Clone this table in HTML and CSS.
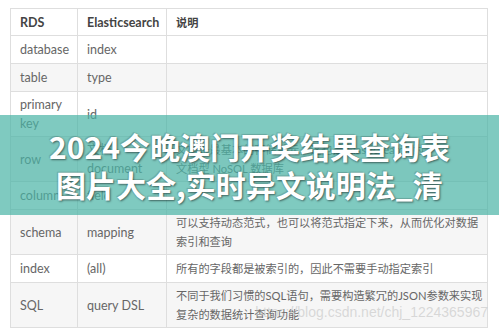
FILE: index.html
```html
<!DOCTYPE html>
<html>
<head>
  <title>RDS 与 Elasticsearch 对照</title>
  <link rel="stylesheet" href="styles.css">
</head>
<body>
  <div class="page">
    <table class="compare">
      <colgroup>
        <col class="c1">
        <col class="c2">
        <col class="c3">
      </colgroup>
      <tr class="head">
        <th>RDS</th>
        <th>Elasticsearch</th>
        <th class="desc">说明</th>
      </tr>
      <tr class="single">
        <td>database</td>
        <td>index</td>
        <td class="desc"></td>
      </tr>
      <tr class="single alt">
        <td>table</td>
        <td>type</td>
        <td class="desc"></td>
      </tr>
      <tr class="double">
        <td>primary<br>key</td>
        <td>id</td>
        <td class="desc"></td>
      </tr>
      <tr class="double alt">
        <td>row</td>
        <td>文档<br>document</td>
        <td class="desc">文档是最基本的存储单元，这也是 Elasticsearch 为<br>文档型 NoSQL 数据库</td>
      </tr>
      <tr class="single">
        <td>column</td>
        <td>field</td>
        <td class="desc"></td>
      </tr>
      <tr class="double alt">
        <td>schema</td>
        <td>mapping</td>
        <td class="desc">可以支持动态范式，也可以将范式指定下来，从而优化对数据<br>索引和查询</td>
      </tr>
      <tr class="single">
        <td>index</td>
        <td>(all)</td>
        <td class="desc">所有的字段都是被索引的，因此不需要手动指定索引</td>
      </tr>
      <tr class="double alt">
        <td>SQL</td>
        <td>query DSL</td>
        <td class="desc">不同于我们习惯的SQL语句，需要构造繁冗的JSON参数来实现<br>复杂的数据统计查询功能</td>
      </tr>
    </table>

    <div class="watermark">https://blog.csdn.net/chj_1224365967</div>

    <div class="banner">
      <div class="banner-title">2024今晚澳门开奖结果查询表<br>图片大全,实时异文说明法_清</div>
    </div>
  </div>
</body>
</html>
```

FILE: styles.css
```css
body {
  margin: 0;
  background-color: #fff;
  font-family: Lato, "Noto Sans CJK SC", sans-serif;
}

.page {
  position: relative;
  width: 499px;
  height: 333px;
  overflow: hidden;
  padding-top: 8px;
  box-sizing: border-box;
}

.compare {
  margin-left: 10px;
  width: 478px;
  table-layout: fixed;
  border-collapse: collapse;
  border: 1px solid #dcdcdc;
  font-size: 12.5px;
  color: #666;
}

.compare .c1 { width: 67px; }
.compare .c2 { width: 89px; }

.compare th,
.compare td {
  border: 1px solid #dedede;
  padding: 0 9px;
  text-align: left;
  vertical-align: middle;
  line-height: 19px;
  white-space: nowrap;
  overflow: hidden;
}

.compare th {
  font-weight: bold;
  color: #444;
  background-color: #fff;
}

.head { height: 27px; }
.single { height: 28px; }
.double { height: 45px; }

.alt td {
  background-color: #f6f6f6;
}

.desc {
  font-size: 11.2px;
}

.watermark {
  position: absolute;
  right: 11px;
  top: 304px;
  font-family: "Liberation Sans", sans-serif;
  font-size: 14px;
  color: rgba(185, 185, 185, 0.5);
}

.banner {
  position: absolute;
  left: 0;
  top: 115px;
  width: 100%;
  height: 100px;
  background-color: rgba(72, 180, 165, 0.7);
  display: flex;
  align-items: center;
  justify-content: center;
}

.banner-title {
  font-family: "Noto Sans CJK SC", sans-serif;
  font-weight: bold;
  font-size: 30px;
  line-height: 38px;
  color: #fff;
  text-align: center;
  text-shadow: 1px 1px 2px rgba(0, 0, 0, 0.5), -1px -1px 1px rgba(0, 0, 0, 0.15);
}
```
